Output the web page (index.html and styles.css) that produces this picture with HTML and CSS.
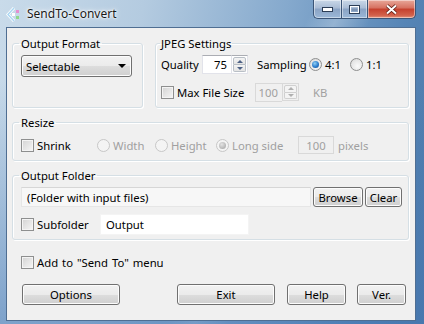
FILE: index.html
```html
<!DOCTYPE html>
<html>
  <head>
    <title>SendTo-Convert</title>
    <meta charset="utf-8">
    <link rel="stylesheet" href="styles.css">
  </head>
  <body>
    <div class="window">
      <div class="titlebar">
        <svg class="app-icon" width="15" height="15" viewBox="0 0 15 15">
          <path d="M8 1 L2 7.5 L8 14" fill="none" stroke="#ffffff" stroke-width="3"/>
          <path d="M8 1 L2 7.5 L8 14" fill="none" stroke="#a9d6f2" stroke-width="1.4"/>
          <rect x="10" y="3" width="3" height="3" fill="#e58fd0"/>
          <rect x="10" y="9" width="3" height="3" fill="#8fd98a"/>
          <rect x="6" y="6" width="3" height="3" fill="#ffffff"/>
        </svg>
        <span class="title">SendTo-Convert</span>
        <div class="caption">
          <span class="cap cap-min">
            <svg width="11" height="5" viewBox="0 0 11 5"><rect x="0.5" y="0.5" width="10" height="4" fill="#fff" stroke="#2c3e57"/></svg>
          </span>
          <span class="cap cap-max">
            <svg width="11" height="9" viewBox="0 0 11 9"><rect x="0.5" y="0.5" width="10" height="8" fill="none" stroke="#2c3e57"/><rect x="1.5" y="1.5" width="8" height="6" fill="none" stroke="#fff"/><rect x="3" y="3.5" width="5" height="2.5" fill="#7c93b3"/></svg>
          </span>
          <span class="cap cap-close">
            <svg width="13" height="11" viewBox="0 0 13 11"><path d="M2 1.5 L11 9.5 M11 1.5 L2 9.5" stroke="#5a1a12" stroke-width="3.6"/><path d="M2 1.5 L11 9.5 M11 1.5 L2 9.5" stroke="#ffffff" stroke-width="2"/></svg>
          </span>
        </div>
      </div>

      <div class="client">
        <div class="toprow">
          <fieldset class="group group-format">
            <legend>Output Format</legend>
            <div class="select">Selectable<span class="arrow"></span></div>
          </fieldset>

          <fieldset class="group group-jpeg">
            <legend>JPEG Settings</legend>
            <div class="row row-quality">
              <span class="lbl lbl-quality">Quality</span>
              <span class="spin spin-quality">
                <span class="field">75</span>
                <span class="spin-btns"><span class="up"></span><span class="down"></span></span>
              </span>
              <span class="lbl lbl-sampling">Sampling</span>
              <span class="radio checked"></span><span class="lbl lbl-41">4:1</span>
              <span class="radio"></span><span class="lbl">1:1</span>
            </div>
            <div class="row row-maxsize">
              <span class="check"></span><span class="lbl lbl-maxsize">Max File Size</span>
              <span class="spin spin-size disabled">
                <span class="field">100</span>
                <span class="spin-btns"><span class="up"></span><span class="down"></span></span>
              </span>
              <span class="lbl dim lbl-kb">KB</span>
            </div>
          </fieldset>
        </div>

        <fieldset class="group group-resize">
          <legend>Resize</legend>
          <div class="row">
            <span class="check"></span><span class="lbl lbl-shrink">Shrink</span>
            <span class="radio disabled"></span><span class="lbl dim lbl-width">Width</span>
            <span class="radio disabled"></span><span class="lbl dim lbl-height">Height</span>
            <span class="radio disabled dimchecked"></span><span class="lbl dim lbl-long">Long side</span>
            <span class="field field-pixels disabled">100</span>
            <span class="lbl dim lbl-pixels">pixels</span>
          </div>
        </fieldset>

        <fieldset class="group group-folder">
          <legend>Output Folder</legend>
          <div class="row row-path">
            <span class="field field-path">(Folder with input files)</span>
            <span class="btn btn-browse">Browse</span>
            <span class="btn btn-clear">Clear</span>
          </div>
          <div class="row row-sub">
            <span class="check"></span><span class="lbl lbl-sub">Subfolder</span>
            <span class="field field-sub">Output</span>
          </div>
        </fieldset>

        <div class="row row-sendto">
          <span class="check"></span><span class="lbl lbl-sendto">Add to "Send To" menu</span>
        </div>

        <div class="buttons">
          <span class="btn btn-options">Options</span>
          <span class="btn btn-exit">Exit</span>
          <span class="btn btn-help">Help</span>
          <span class="btn btn-ver">Ver.</span>
        </div>
      </div>
    </div>
  </body>
</html>
```

FILE: styles.css
```css
body {
  margin:0;
  font:11.3px/15px 'Noto Sans', sans-serif;
  color:#000;
}

.window {
  width:424px;
  height:324px;
  overflow:hidden;
  background:
    linear-gradient(to bottom, rgba(70,120,180,0) 25%, rgba(70,120,180,0.55) 100%),
    linear-gradient(115deg, rgba(255,255,255,0) 55%, rgba(255,255,255,0.25) 60%, rgba(255,255,255,0) 66%),
    linear-gradient(100deg, #c9dbea 0%, #b4cbe0 30%, #85a9cd 60%, #5685b6 85%, #4b78a8 100%);
}

/* title bar */

.titlebar {
  height:27px;
  display:flex;
  align-items:flex-start;
}

.app-icon {
  margin:7px 0 0 6px;
}

.title {
  margin:6px 0 0 6px;
  font:12px/15px 'Noto Sans', sans-serif;
  color:#1a1a1a;
  text-shadow:0 0 6px #fff, 0 0 3px #fff, 0 0 2px #fff;
}

.caption {
  margin-left:auto;
  margin-right:8px;
  display:flex;
  height:19px;
}

.cap {
  display:flex;
  align-items:center;
  justify-content:center;
  height:18px;
  border:1px solid #3b5577;
  border-top:none;
  background:linear-gradient(#cad8e8 0%, #a9bcd5 45%, #8aa3c4 50%, #9bb8d8 100%);
  box-shadow:inset 0 0 0 1px rgba(255,255,255,0.45);
}

.cap-min {
  width:27px;
  border-bottom-left-radius:5px;
  border-right:none;
}

.cap-max {
  width:25px;
  border-right:none;
}

.cap-close {
  width:47px;
  border-bottom-right-radius:5px;
  background:linear-gradient(#e8a89a 0%, #d6705f 45%, #c5402d 50%, #d2614b 85%, #e3937c 100%);
}

/* client area */

.client {
  margin-left:6px;
  width:410px;
  height:294px;
  box-sizing:border-box;
  border:1px solid #4f6e92;
  background:#f0f0f0;
  padding:8px 6px 0 5px;
}

.toprow {
  display:flex;
  gap:12px;
}

.group {
  margin:0;
  padding:0 6px 0 8px;
  border:1px solid #d5dfe5;
  border-radius:3px;
  box-shadow:inset 1px 1px 0 #fff, 1px 1px 0 #fff;
  min-width:0;
}

.group legend {
  padding:0 2px;
  margin-left:-2px;
  font:11.3px/15px 'Noto Sans', sans-serif;
}

.group-format {
  width:131px;
  box-sizing:border-box;
  padding-bottom:8px;
}

.group-jpeg {
  flex:1;
  padding-left:5px;
  padding-bottom:6px;
}

.group-jpeg legend {
  margin-left:-1px;
  padding:0 1px;
}

.group-resize {
  margin-top:7px;
  padding-bottom:6px;
}

.group-folder {
  margin-top:7px;
  padding-bottom:4px;
}

.row {
  display:flex;
  align-items:center;
}

.lbl {
  white-space:nowrap;
}

.dim {
  color:#a0a0a0;
}

/* select */

.select {
  margin-top:4px;
  width:111px;
  height:22px;
  box-sizing:border-box;
  display:flex;
  align-items:center;
  padding-left:4px;
  border:1px solid #707070;
  border-radius:3px;
  background:linear-gradient(#f2f2f2 0%, #ebebeb 50%, #dddddd 51%, #cfcfcf 100%);
  box-shadow:inset 0 0 0 1px #fcfcfc;
}

.arrow {
  margin-left:auto;
  margin-right:5px;
  width:0;
  height:0;
  border-left:4px solid transparent;
  border-right:4px solid transparent;
  border-top:4px solid #000;
}

/* edit fields */

.field {
  display:flex;
  align-items:center;
  justify-content:flex-end;
  box-sizing:border-box;
  height:19px;
  padding:0 4px;
  background:#fff;
  border:1px solid #e2e3ea;
  border-top-color:#abadb3;
}

.field.disabled, .disabled .field {
  background:#f0f0f0;
  border-color:#d9d9d9;
  color:#a0a0a0;
}

.spin {
  display:flex;
  height:19px;
}

.spin .field {
  width:29px;
  border-right:none;
}

.spin-btns {
  display:flex;
  flex-direction:column;
  width:17px;
  box-sizing:border-box;
  border:1px solid #e2e3ea;
  border-top-color:#abadb3;
  background:#fff;
  padding:1px;
}

.spin-btns span {
  flex:1;
  display:flex;
  align-items:center;
  justify-content:center;
  border:1px solid #b9bfc6;
  background:linear-gradient(#f4f4f4, #e3e3e3);
}

.spin-btns .up {
  border-radius:2px 2px 0 0;
}

.spin-btns .down {
  border-radius:0 0 2px 2px;
  border-top:none;
}

.spin-btns .up::after {
  content:'';
  border-left:3px solid transparent;
  border-right:3px solid transparent;
  border-bottom:3px solid #4d6185;
}

.spin-btns .down::after {
  content:'';
  border-left:3px solid transparent;
  border-right:3px solid transparent;
  border-top:3px solid #4d6185;
}

.disabled .spin-btns {
  border-color:#d9d9d9;
  background:#f0f0f0;
}

.disabled .spin-btns span {
  border-color:#d0d0d0;
  background:#f4f4f4;
}

.disabled .spin-btns .up::after {
  border-bottom-color:#b0b0b0;
}

.disabled .spin-btns .down::after {
  border-top-color:#b0b0b0;
}

/* check boxes and radios */

.check {
  flex:none;
  width:13px;
  height:13px;
  box-sizing:border-box;
  margin-right:3px;
  border:1px solid #8e8f8f;
  background:linear-gradient(135deg, #d3d3d3, #f6f6f6);
  box-shadow:inset 0 0 0 1px #f4f4f4;
}

.radio {
  flex:none;
  width:13px;
  height:13px;
  box-sizing:border-box;
  margin-right:3px;
  border-radius:50%;
  border:1px solid #8e8f8f;
  background:radial-gradient(circle at 60% 65%, #fafafa 0%, #e6e6e6 60%, #cfcfcf 100%);
  display:flex;
  align-items:center;
  justify-content:center;
}

.radio.checked::after {
  content:'';
  width:7px;
  height:7px;
  border-radius:50%;
  background:radial-gradient(circle at 40% 35%, #8fd0f5 0%, #2c7ccc 55%, #0c4a8a 100%);
}

.radio.disabled {
  border-color:#c7c7c7;
  background:#f4f4f4;
}

.radio.dimchecked::after {
  content:'';
  width:7px;
  height:7px;
  border-radius:50%;
  background:radial-gradient(circle at 40% 35%, #e4e4e4 0%, #b4b4b4 70%);
}

/* jpeg rows */

.row-quality {
  margin-top:4px;
}

.lbl-quality {
  width:41px;
}

.lbl-sampling {
  margin-left:9px;
  width:52px;
}

.lbl-41 {
  width:25px;
}

.row-maxsize {
  margin-top:9px;
}

.lbl-maxsize {
  width:78px;
}

.spin-size {
  height:18px;
}

.spin-size .field {
  width:27px;
}

.lbl-kb {
  margin-left:14px;
}

/* resize row */

.group-resize .row {
  margin-top:6px;
}

.lbl-shrink {
  width:60px;
}

.lbl-width {
  width:42px;
}

.lbl-height {
  width:45px;
}

.lbl-long {
  width:66px;
}

.field-pixels {
  width:36px;
  height:18px;
  justify-content:center;
}

.lbl-pixels {
  margin-left:4px;
}

/* folder rows */

.row-path {
  margin-top:4px;
}

.field-path {
  width:290px;
  height:20px;
  justify-content:flex-start;
  padding-left:5px;
  background:#f7f7f7;
  border-color:#e6e6e6;
  border-top-color:#d6d6d6;
}

.row-sub {
  margin-top:7px;
}

.lbl-sub {
  width:63px;
}

.field-sub {
  width:149px;
  height:21px;
  justify-content:flex-start;
  padding-left:5px;
  border-color:#f4f4f4;
}

/* buttons */

.btn {
  display:flex;
  align-items:center;
  justify-content:center;
  box-sizing:border-box;
  height:21px;
  border:1px solid #707070;
  border-radius:3px;
  background:linear-gradient(#f2f2f2 0%, #ebebeb 50%, #dddddd 51%, #cfcfcf 100%);
  box-shadow:inset 0 0 0 1px #fcfcfc;
}

.btn-browse {
  margin-left:2px;
  width:50px;
  height:20px;
}

.btn-clear {
  margin-left:2px;
  width:37px;
  height:20px;
}

.row-sendto {
  margin-top:15px;
  padding-left:9px;
}

.lbl-sendto {
  word-spacing:1px;
}

.buttons {
  display:flex;
  margin-top:14px;
}

.btn-options {
  margin-left:10px;
  width:98px;
}

.btn-exit {
  margin-left:57px;
  width:98px;
}

.btn-help {
  margin-left:12px;
  width:59px;
}

.btn-ver {
  margin-left:11px;
  width:49px;
}
```
